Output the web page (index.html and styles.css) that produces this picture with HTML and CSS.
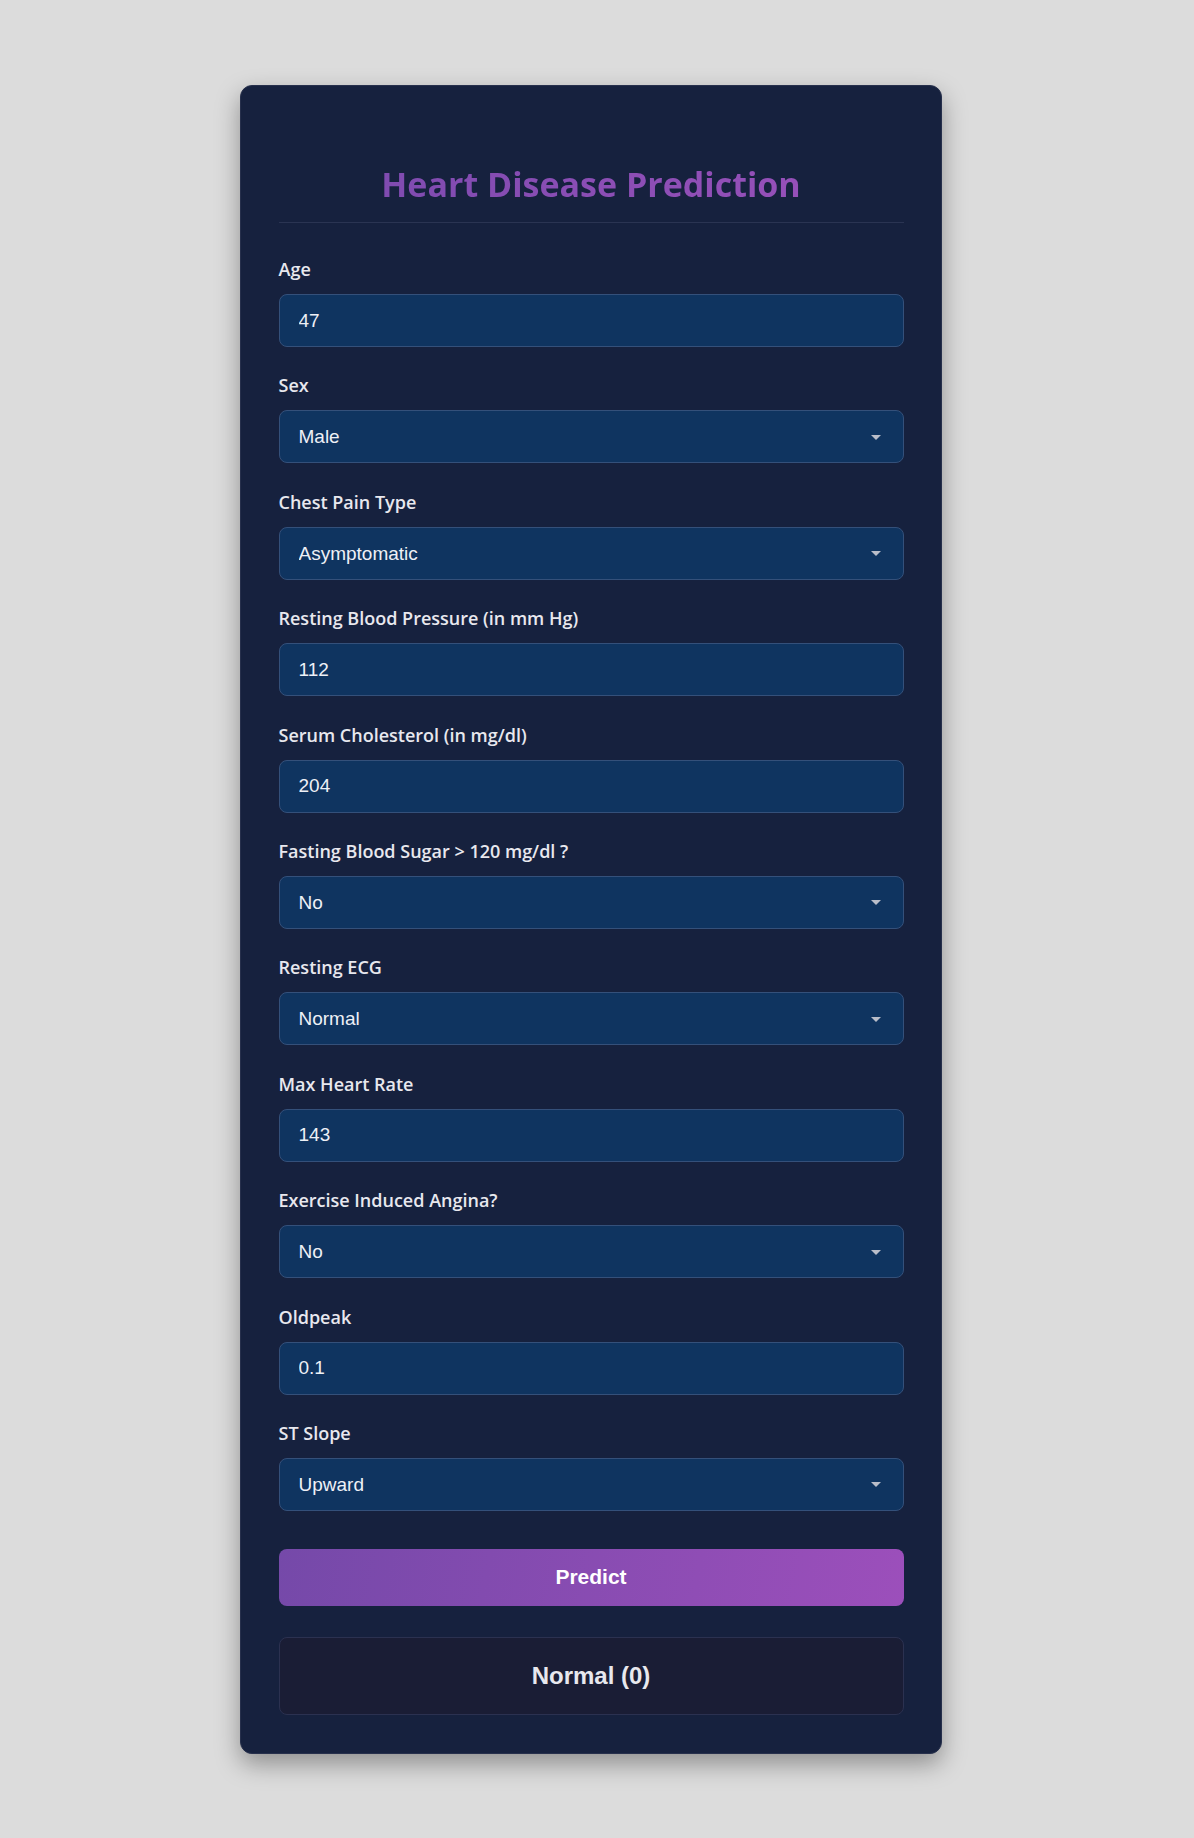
FILE: index.html
```html
<!DOCTYPE html>
<html lang="en">
<head>
<meta charset="utf-8">
<title>Heart Disease Prediction</title>
<link rel="stylesheet" href="styles.css">
</head>
<body>
<main class="card">
  <h1 class="title">Heart Disease Prediction</h1>
  <form class="form">
    <div class="group">
      <label class="label">Age</label>
      <input class="field" type="text" value="47">
    </div>
    <div class="group">
      <label class="label">Sex</label>
      <div class="select-wrap"><select class="field"><option>Male</option><option>Female</option></select></div>
    </div>
    <div class="group">
      <label class="label">Chest Pain Type</label>
      <div class="select-wrap"><select class="field"><option>Asymptomatic</option></select></div>
    </div>
    <div class="group">
      <label class="label">Resting Blood Pressure (in mm Hg)</label>
      <input class="field" type="text" value="112">
    </div>
    <div class="group">
      <label class="label">Serum Cholesterol (in mg/dl)</label>
      <input class="field" type="text" value="204">
    </div>
    <div class="group">
      <label class="label">Fasting Blood Sugar &gt; 120 mg/dl ?</label>
      <div class="select-wrap"><select class="field"><option>No</option></select></div>
    </div>
    <div class="group">
      <label class="label">Resting ECG</label>
      <div class="select-wrap"><select class="field"><option>Normal</option></select></div>
    </div>
    <div class="group">
      <label class="label">Max Heart Rate</label>
      <input class="field" type="text" value="143">
    </div>
    <div class="group">
      <label class="label">Exercise Induced Angina?</label>
      <div class="select-wrap"><select class="field"><option>No</option></select></div>
    </div>
    <div class="group">
      <label class="label">Oldpeak</label>
      <input class="field" type="text" value="0.1">
    </div>
    <div class="group">
      <label class="label">ST Slope</label>
      <div class="select-wrap"><select class="field"><option>Upward</option></select></div>
    </div>
    <button class="btn" type="button">Predict</button>
  </form>
  <div class="result">Normal (0)</div>
</main>
</body>
</html>
```
FILE: styles.css
```css
html, body {
  margin: 0;
  padding: 0;
}
body {
  background: #dcdcdc;
  font-family: "Open Sans", "Noto Sans", sans-serif;
  display: flex;
  justify-content: center;
  padding: 85px 12px 84px 0;
}
.card {
  box-sizing: border-box;
  width: 702px;
  padding: 38px 37.5px;
  background: #16213e;
  border: 1px solid #27304c;
  border-radius: 12px;
  box-shadow: 0 10px 25px rgba(0, 0, 0, 0.35);
}
.title {
  margin: 40px 0 35px;
  padding-bottom: 18px;
  border-bottom: 1px solid #2a3452;
  text-align: center;
  font-size: 34px;
  line-height: 40px;
  font-weight: 700;
  background: linear-gradient(90deg, #7a4aae, #9b51bb);
  -webkit-background-clip: text;
  background-clip: text;
  color: transparent;
}
.form {
  display: flex;
  flex-direction: column;
}
.group {
  display: flex;
  flex-direction: column;
  margin-bottom: 27.4px;
}
.label {
  font-size: 18px;
  line-height: 22px;
  font-weight: 600;
  color: #e8e8ee;
  margin-bottom: 14px;
}
.field {
  box-sizing: border-box;
  width: 100%;
  height: 53px;
  margin: 0;
  padding: 0 18px 0 19px;
  background: #0f3460;
  border: 1px solid #34507a;
  border-radius: 8px;
  color: #eef0f6;
  font-family: "Liberation Sans", Arial, sans-serif;
  font-size: 19px;
  outline: none;
  -webkit-appearance: none;
  appearance: none;
}
.select-wrap {
  position: relative;
}
.select-wrap::after {
  content: "";
  position: absolute;
  right: 23px;
  top: 50%;
  margin-top: -2px;
  border-left: 5px solid transparent;
  border-right: 5px solid transparent;
  border-top: 5px solid #b9bdc9;
  pointer-events: none;
}
.btn {
  margin-top: 10.6px;
  height: 57px;
  border: none;
  border-radius: 8px;
  background: linear-gradient(100deg, #7549a9, #9c4fbb);
  color: #ffffff;
  font-family: "Liberation Sans", Arial, sans-serif;
  font-size: 21px;
  font-weight: 700;
  cursor: pointer;
}
.result {
  margin-top: 31px;
  height: 76px;
  display: flex;
  align-items: center;
  justify-content: center;
  background: #1a1d35;
  border: 1px solid #2b3150;
  border-radius: 8px;
  color: #e8e8ee;
  font-family: "Liberation Sans", Arial, sans-serif;
  font-size: 24px;
  font-weight: 700;
}
```
